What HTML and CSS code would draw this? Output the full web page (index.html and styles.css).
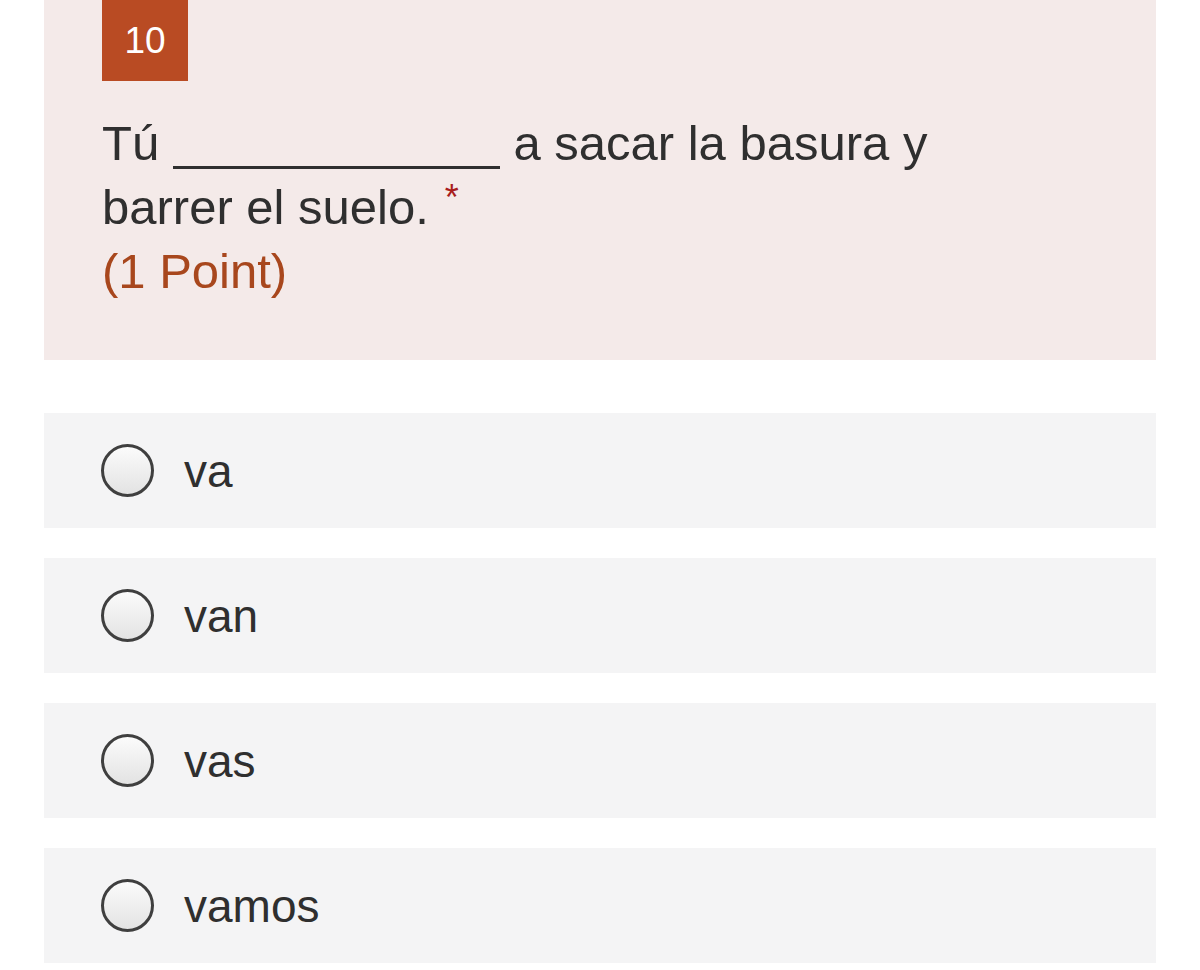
FILE: index.html
```html
<!DOCTYPE html>
<html lang="es">
<head>
<meta charset="utf-8">
<title>Pregunta 10</title>
<link rel="stylesheet" href="styles.css">
</head>
<body>
<main class="page">
  <section class="question-card">
    <div class="badge">10</div>
    <div class="question-text">
      Tú <span class="blank"></span> a sacar la basura y barrer el suelo.<span class="required">*</span><br>
      <span class="points">(1 Point)</span>
    </div>
  </section>
  <div class="options">
    <label class="option"><span class="radio"></span><span class="option-label">va</span></label>
    <label class="option"><span class="radio"></span><span class="option-label">van</span></label>
    <label class="option"><span class="radio"></span><span class="option-label">vas</span></label>
    <label class="option"><span class="radio"></span><span class="option-label">vamos</span></label>
  </div>
</main>
</body>
</html>
```

FILE: styles.css
```css
html, body {
  margin: 0;
  padding: 0;
  background: #ffffff;
}

body {
  font-family: "Liberation Sans", Arial, Helvetica, sans-serif;
  color: #2f2f2f;
}

.page {
  padding: 0 44px;
}

.question-card {
  background: #f4eae9;
  padding: 0 58px 57px 58px;
}

.badge {
  width: 86px;
  height: 81px;
  background: #b94b23;
  color: #ffffff;
  font-size: 37px;
  display: flex;
  align-items: center;
  justify-content: center;
}

.question-text {
  margin-top: 30px;
  font-size: 49px;
  line-height: 64px;
  max-width: 920px;
}

.blank {
  display: inline-block;
  width: 327px;
  height: 0;
  border-bottom: 3px solid #2f2f2f;
  vertical-align: -9px;
}

.required {
  color: #a81d1d;
  font-size: 36px;
  line-height: 0;
  vertical-align: 14px;
  margin-left: 16px;
}

.points {
  color: #a8471d;
}

.options {
  display: flex;
  flex-direction: column;
  gap: 30px;
  margin-top: 53px;
}

.option {
  height: 115px;
  background: #f4f4f5;
  display: flex;
  align-items: center;
  padding-left: 57px;
  gap: 30px;
}

.radio {
  box-sizing: border-box;
  width: 53px;
  height: 53px;
  border-radius: 50%;
  border: 3px solid #3f3f3f;
  background: linear-gradient(to bottom, #fbfbfb 0%, #e3e3e3 100%);
  flex: none;
}

.option-label {
  font-size: 46px;
  color: #2f2f2f;
}
```
